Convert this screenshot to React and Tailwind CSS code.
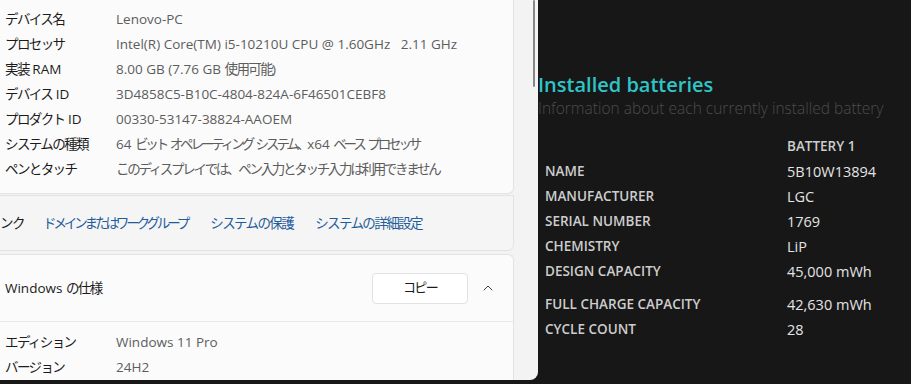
import { ChevronUp } from 'lucide-react';

const specs = [
  ['デバイス名', 'Lenovo-PC'],
  ['プロセッサ', 'Intel(R) Core(TM) i5-10210U CPU @ 1.60GHz   2.11 GHz'],
  ['実装 RAM', '8.00 GB (7.76 GB 使用可能)'],
  ['デバイス ID', '3D4858C5-B10C-4804-824A-6F46501CEBF8'],
  ['プロダクト ID', '00330-53147-38824-AAOEM'],
  ['システムの種類', '64 ビット オペレーティング システム、x64 ベース プロセッサ', 'c'],
  ['ペンとタッチ', 'このディスプレイでは、ペン入力とタッチ入力は利用できません', 'b'],
];

const winSpecs = [
  ['エディション', 'Windows 11 Pro'],
  ['バージョン', '24H2'],
];

const battery = [
  ['NAME', '5B10W13894'],
  ['MANUFACTURER', 'LGC'],
  ['SERIAL NUMBER', '1769'],
  ['CHEMISTRY', 'LiP'],
  ['DESIGN CAPACITY', '45,000 mWh'],
];

const battery2 = [
  ['FULL CHARGE CAPACITY', '42,630 mWh'],
  ['CYCLE COUNT', '28'],
];

const squeeze = {
  a: 'tracking-[-1.6px]',
  b: 'tracking-[-2.3px]',
  c: 'tracking-[-3.1px]',
};

// Yu Gothic UI kana are much narrower than Noto CJK, so squeeze the CJK runs
function Jp({ text, t = 'a' }) {
  const parts = text.split(/([\u3000-\u30ff\u4e00-\u9fff\uff00-\uffef]+)/);
  return parts.map((p, i) =>
    i % 2 === 1 ? (
      <span key={i} className={squeeze[t]}>{p}</span>
    ) : (
      <span key={i}>{p}</span>
    )
  );
}

function SpecRow({ label, value, t }) {
  return (
    <div className="flex h-[25px] items-center text-[13.5px]">
      <span className="w-[116px] shrink-0 pl-[5px] text-[#1b1b1b]"><Jp text={label} /></span>
      <span className="whitespace-pre text-[#5d5d5d]"><Jp text={value} t={t} /></span>
    </div>
  );
}

function BatteryRow({ label, value }) {
  return (
    <div className="flex h-[25px] items-center">
      <span className="w-[249px] shrink-0 pl-[7px] text-[13.5px] font-semibold text-[#cdcdcd]">{label}</span>
      <span className="text-[14.5px] text-[#e4e4e4]">{value}</span>
    </div>
  );
}

export default function App() {
  return (
    <div className="flex h-[384px] w-[911px] overflow-hidden bg-[#171717] font-['Open_Sans','Noto_Sans_CJK_JP',sans-serif]">
      {/* settings window */}
      <div className="flex h-[380px] w-[538px] shrink-0 overflow-hidden rounded-br-lg bg-[#f3f3f3]">
        <div className="flex w-[514px] shrink-0 flex-col">
          <div className="rounded-br-md border-b border-r border-[#e3e3e3] bg-[#fbfbfb] pt-[7px] pb-[11px]">
            {specs.map(([l, v, t]) => (
              <SpecRow key={l} label={l} value={v} t={t} />
            ))}
          </div>
          <div className="mt-px flex h-[57px] items-center rounded-br-md border-b border-r border-t border-[#e3e3e3] bg-[#f5f5f5] text-[13.5px]">
            <span className="w-[43px] text-[#1b1b1b]"><Jp text="ンク" /></span>
            <span className="text-[#1f5c9c]"><Jp text="ドメインまたはワークグループ" t="c" /></span>
            <span className="ml-[23px] text-[#1f5c9c]"><Jp text="システムの保護" /></span>
            <span className="ml-[22px] text-[#1f5c9c]"><Jp text="システムの詳細設定" /></span>
          </div>
          <div className="mt-[3px] flex-1 rounded-tr-md border-r border-t border-[#e3e3e3] bg-[#fbfbfb]">
            <div className="flex h-[67px] items-center border-b border-[#e8e8e8] pl-[5px] text-[13.5px] text-[#1b1b1b]">
              <span className="flex-1"><Jp text="Windows の仕様" /></span>
              <button className="flex h-[31px] w-[96px] items-center justify-center rounded-[4px] border border-[#e2e2e2] bg-white text-[13px] text-[#1b1b1b]">
                <Jp text="コピー" />
              </button>
              <span className="flex w-[45px] pl-[12px] text-[#333]">
                <ChevronUp size={16} strokeWidth={1.4} />
              </span>
            </div>
            <div className="pt-[8px]">
              {winSpecs.map(([l, v]) => (
                <SpecRow key={l} label={l} value={v} />
              ))}
            </div>
          </div>
        </div>
        <div className="flex w-[24px] justify-end pr-[3px]">
          <div className="h-[87px] w-[2px] rounded-full bg-[#878787]" />
        </div>
      </div>

      {/* battery report */}
      <div className="flex-1 pt-[73px]">
        <div className="text-[20px] leading-[24px] font-semibold text-[#30c4c7]">Installed batteries</div>
        <div className="text-[15.5px] leading-[22px] font-light text-[#4c4c4c]">
          Information about each currently installed battery
        </div>
        <div className="mt-[15px]">
          <div className="flex h-[25px] items-center">
            <span className="w-[249px] shrink-0" />
            <span className="text-[13.5px] font-semibold text-[#cdcdcd]">BATTERY 1</span>
          </div>
          {battery.map(([l, v]) => (
            <BatteryRow key={l} label={l} value={v} />
          ))}
          <div className="mt-[8px]">
            {battery2.map(([l, v]) => (
              <BatteryRow key={l} label={l} value={v} />
            ))}
          </div>
        </div>
      </div>
    </div>
  );
}
